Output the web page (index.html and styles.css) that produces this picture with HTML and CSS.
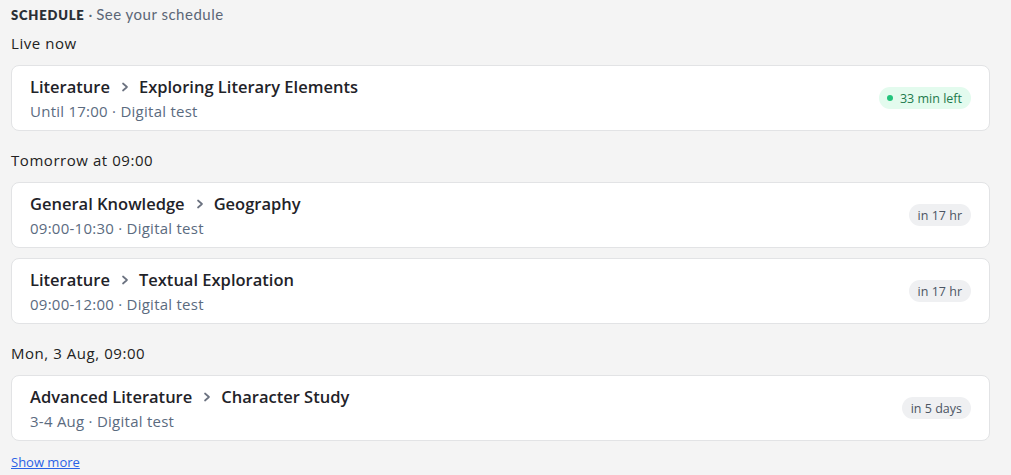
FILE: index.html
```html
<!DOCTYPE html>
<html lang="en">
<head>
<meta charset="utf-8">
<title>Schedule</title>
<link rel="stylesheet" href="styles.css">
</head>
<body>
<main class="page">
  <header class="page-head">
    <span class="eyebrow">SCHEDULE</span><span class="sep"> · </span><span class="subtitle">See your schedule</span>
  </header>

  <section class="group">
    <h2 class="group-title">Live now</h2>
    <div class="card">
      <div class="card-main">
        <div class="card-title"><span>Literature</span><svg class="chev" viewBox="0 0 8 10" width="8" height="10"><path d="M2 1.5 L6 5 L2 8.5" fill="none" stroke="currentColor" stroke-width="1.7" stroke-linecap="round" stroke-linejoin="round"/></svg><span>Exploring Literary Elements</span></div>
        <div class="card-meta">Until 17:00 · Digital test</div>
      </div>
      <span class="pill pill-live"><span class="dot"></span>33 min left</span>
    </div>
  </section>

  <section class="group">
    <h2 class="group-title">Tomorrow at 09:00</h2>
    <div class="card">
      <div class="card-main">
        <div class="card-title"><span>General Knowledge</span><svg class="chev" viewBox="0 0 8 10" width="8" height="10"><path d="M2 1.5 L6 5 L2 8.5" fill="none" stroke="currentColor" stroke-width="1.7" stroke-linecap="round" stroke-linejoin="round"/></svg><span>Geography</span></div>
        <div class="card-meta">09:00-10:30 · Digital test</div>
      </div>
      <span class="pill">in 17 hr</span>
    </div>
    <div class="card">
      <div class="card-main">
        <div class="card-title"><span>Literature</span><svg class="chev" viewBox="0 0 8 10" width="8" height="10"><path d="M2 1.5 L6 5 L2 8.5" fill="none" stroke="currentColor" stroke-width="1.7" stroke-linecap="round" stroke-linejoin="round"/></svg><span>Textual Exploration</span></div>
        <div class="card-meta">09:00-12:00 · Digital test</div>
      </div>
      <span class="pill">in 17 hr</span>
    </div>
  </section>

  <section class="group">
    <h2 class="group-title">Mon, 3 Aug, 09:00</h2>
    <div class="card">
      <div class="card-main">
        <div class="card-title"><span>Advanced Literature</span><svg class="chev" viewBox="0 0 8 10" width="8" height="10"><path d="M2 1.5 L6 5 L2 8.5" fill="none" stroke="currentColor" stroke-width="1.7" stroke-linecap="round" stroke-linejoin="round"/></svg><span>Character Study</span></div>
        <div class="card-meta">3-4 Aug · Digital test</div>
      </div>
      <span class="pill">in 5 days</span>
    </div>
  </section>

  <a class="more" href="#">Show more</a>
</main>
</body>
</html>
```

FILE: styles.css
```css
* { box-sizing: border-box; }
html, body { margin: 0; padding: 0; }
body {
  background: #f4f4f4;
  font-family: "Open Sans", "Lato", sans-serif;
  color: #1f2329;
}
.page {
  padding: 3px 21px 0 11px;
  display: flex;
  flex-direction: column;
}
.page-head {
  line-height: 20px;
  height: 20px;
  font-size: 15px;
  font-family: "Lato", sans-serif;
  margin-top: 1px;
}
.eyebrow {
  font-size: 13px;
  font-weight: 800;
  letter-spacing: 0.8px;
  color: #2b2f36;
}
.sep { color: #5b6676; }
.subtitle { color: #5b6676; letter-spacing: 0.5px; }
.group {
  display: flex;
  flex-direction: column;
  gap: 10px;
  margin-top: 9px;
}
.group + .group { margin-top: 19px; }
.group-title {
  margin: 0 0 2px;
  font-family: "Open Sans", "Lato", sans-serif;
  font-weight: 400;
  font-size: 15px;
  letter-spacing: 0.55px;
  line-height: 20px;
  color: #222;
}
.card {
  background: #fff;
  border: 1px solid #e2e3e5;
  border-radius: 8px;
  padding: 9px 18px 9px 18px;
  display: flex;
  align-items: center;
  justify-content: space-between;
  height: 66px;
}
.card-main { display: flex; flex-direction: column; gap: 2px; }
.card-title {
  display: flex;
  align-items: center;
  font-size: 16.5px;
  font-weight: 600;
  line-height: 24px;
  color: #1f2329;
}
.chev {
  color: #6b7280;
  margin: 0 10px 0 11px;
  flex: none;
}
.card-meta {
  font-size: 15px;
  letter-spacing: 0.25px;
  line-height: 20px;
  color: #5b6b7f;
}
.pill {
  display: inline-flex;
  align-items: center;
  height: 22px;
  padding: 0 9px;
  border-radius: 11px;
  background: #eff0f2;
  color: #4b5563;
  font-size: 12.5px;
  white-space: nowrap;
}
.pill-live {
  background: #e3fbee;
  color: #1d7a4c;
  padding: 0 9px 0 8px;
}
.dot {
  width: 6px;
  height: 6px;
  border-radius: 50%;
  background: #22c47c;
  margin-right: 7px;
}
.more {
  margin-top: 12px;
  align-self: flex-start;
  font-size: 13px;
  line-height: 18px;
  color: #2a62e6;
  text-decoration: underline;
}
```
